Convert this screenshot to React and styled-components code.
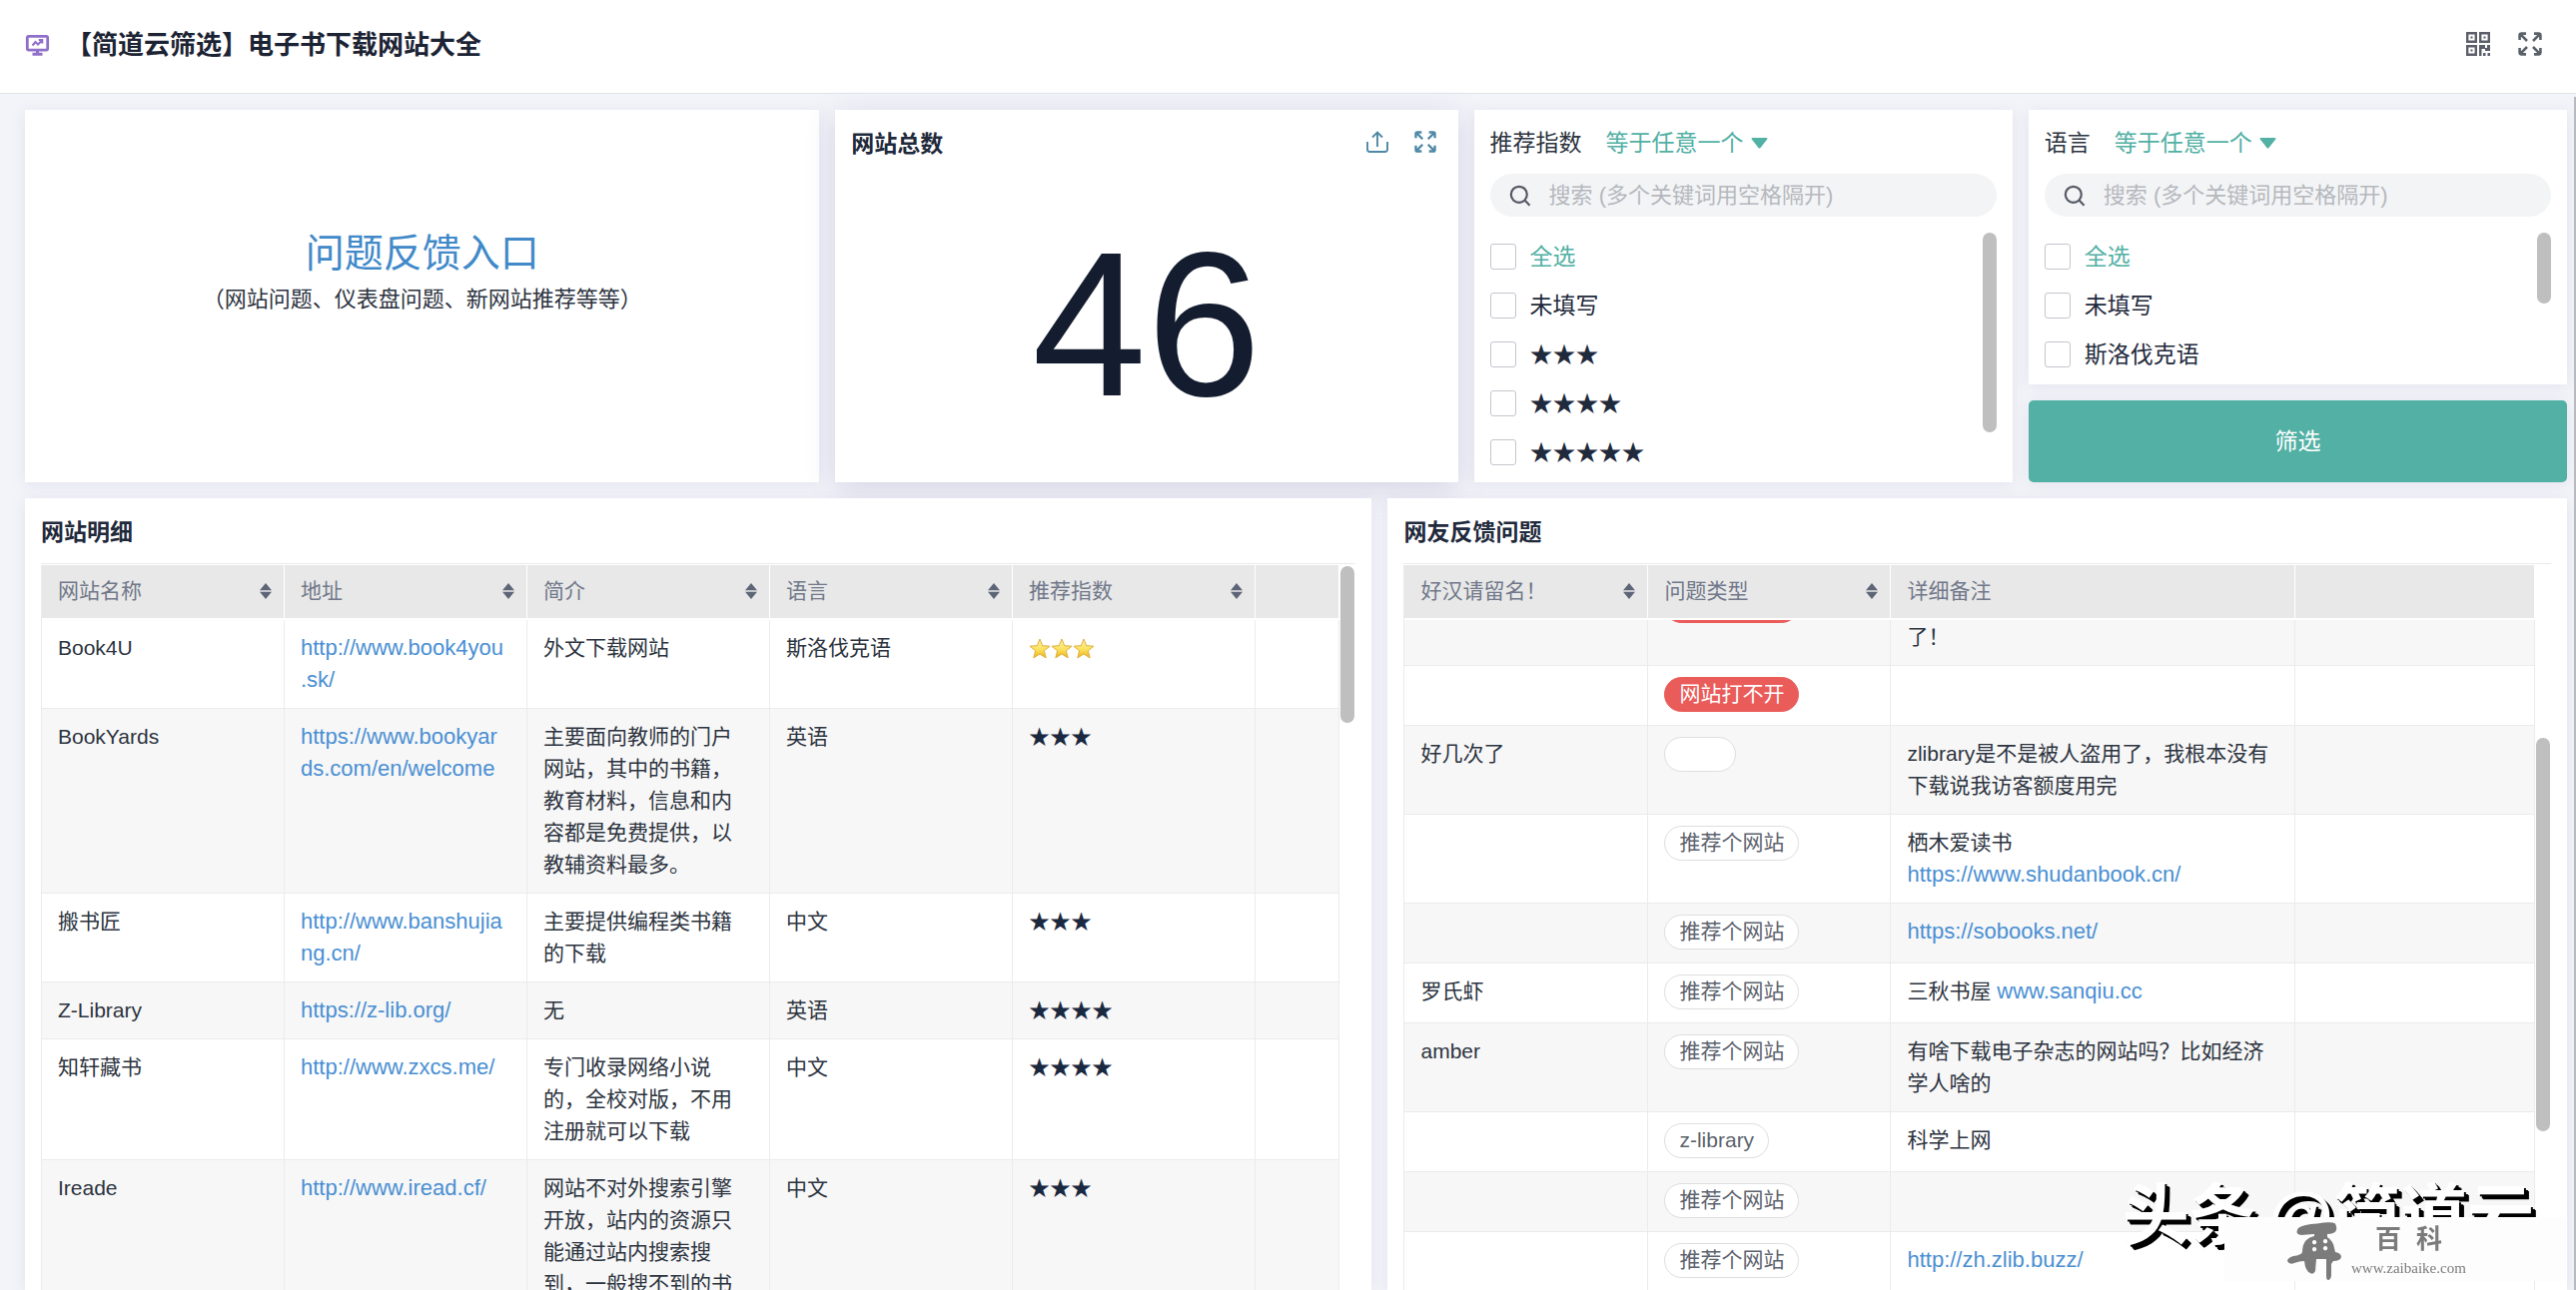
import React, { useLayoutEffect, useRef } from "react";
import styled, { createGlobalStyle, css } from "styled-components";

const color = {
  page: "#f3f4f9",
  ink: "#1f2a3c",
  text: "#2d3440",
  muted: "#71788a",
  teal: "#52b0a4",
  link: "#4a8fd3",
  line: "#ebebeb",
  thumb: "#bfbfbf",
};

const GlobalStyle = createGlobalStyle`
  *, *::before, *::after { box-sizing: border-box; }
  body {
    margin: 0;
    background: ${color.page};
    color: ${color.text};
    font-family: "Liberation Sans", "Noto Sans CJK SC", sans-serif;
    font-size: 23px;
    line-height: 34px;
  }
  button, input, select { font: inherit; color: inherit; }
`;

const Page = styled.div`
  position: relative;
  display: flex;
  flex-direction: column;
  height: 100vh;
  overflow: hidden;
`;

const Header = styled.header`
  display: flex;
  align-items: center;
  gap: 16px;
  flex: none;
  padding: 28px 34px 30px 25px;
  background: #fff;
  border-bottom: 1px solid #e3e4e8;
`;

const PageTitle = styled.h1`
  flex: 1;
  margin: 0;
  color: #1c2434;
  font-size: 26px;
  line-height: 35px;
  font-weight: 700;
`;

const HeaderTools = styled.div`
  display: flex;
  gap: 28px;
  padding-bottom: 4px;
`;

const IconButton = styled.button`
  display: flex;
  padding: 0;
  border: 0;
  background: none;
  color: ${(p) => p.$color || "#5a5f69"};
  cursor: pointer;
`;

const Body = styled.div`
  display: flex;
  flex: 1;
  min-height: 0;
`;

const Dashboard = styled.main`
  display: flex;
  flex-direction: column;
  gap: 16px;
  flex: 1;
  min-width: 0;
  padding: 16px 7px 0 25px;
`;

const PageScrollbar = styled.div`
  width: 2px;
  margin-top: 3px;
  background: #b9bac0;
`;

const SummaryRow = styled.section`
  display: grid;
  grid-template-columns: 795fr 623fr 539fr 539fr;
  gap: 16px;
`;

const TableRow = styled.section`
  display: grid;
  grid-template-columns: 1349fr 1181fr;
  grid-template-rows: minmax(0, 1fr);
  gap: 16px;
  flex: 1;
  min-height: 0;
`;

const Card = styled.article`
  display: flex;
  flex-direction: column;
  min-width: 0;
  min-height: 0;
  padding: 16px 16px 0;
  background: #fff;
  box-shadow: ${(p) =>
    p.$raised
      ? "0 6px 28px rgba(84, 78, 150, 0.2)"
      : "0 2px 14px rgba(84, 88, 140, 0.1)"};
`;

const CardHead = styled.div`
  display: flex;
  align-items: center;
  justify-content: space-between;
`;

const CardTitle = styled.h2`
  margin: 0;
  color: ${color.ink};
  font-size: 23px;
  line-height: 36px;
  font-weight: 700;
`;

const CardTools = styled.div`
  display: flex;
  gap: 26px;
  padding: 0 6px 4px 0;
`;

const FeedbackCard = styled(Card)`
  align-items: center;
  justify-content: center;
  padding-bottom: 66px;
`;

const FeedbackLink = styled.a`
  color: #4189c9;
  font-size: 39px;
  line-height: 56px;
  text-decoration: none;
`;

const FeedbackNote = styled.p`
  margin: 0;
  font-size: 22px;
  line-height: 36px;
`;

const BigNumber = styled.div`
  display: flex;
  flex: 1;
  align-items: center;
  justify-content: center;
  padding-top: 4px;
  color: #141c2f;
  font-size: 206px;
  line-height: 240px;
`;

const FilterHead = styled.div`
  display: flex;
  align-items: center;
`;

const FilterName = styled.span`
  margin-right: 24px;
`;

const MatchSelect = styled.select`
  appearance: none;
  margin: 0 7px 0 0;
  padding: 0;
  border: 0;
  background: none;
  color: ${color.teal};
`;

const SearchBox = styled.label`
  display: flex;
  align-items: center;
  gap: 18px;
  height: 43px;
  margin: 14px 0 15px;
  padding: 0 19px;
  border-radius: 22px;
  background: #f3f4f5;
  color: #565b66;
`;

const SearchInput = styled.input`
  flex: 1;
  min-width: 0;
  padding: 0;
  border: 0;
  outline: 0;
  background: none;
  font-size: 22px;
  &::placeholder {
    color: #b5b8be;
    opacity: 1;
  }
`;

const OptionArea = styled.div`
  display: flex;
  justify-content: space-between;
`;

const OptionList = styled.ul`
  margin: 0;
  padding: 0 0 6px;
  list-style: none;
`;

const Option = styled.label`
  display: flex;
  align-items: center;
  gap: 14px;
  height: 49px;
  color: ${(p) => (p.$all ? color.teal : color.ink)};
`;

const Tick = styled.input`
  appearance: none;
  flex: none;
  width: 26px;
  height: 26px;
  margin: 0;
  border: 1px solid #c3c6cc;
  border-radius: 3px;
  background: #fff;
`;

const Thumb = styled.div`
  flex: none;
  width: 14px;
  height: ${(p) => p.$length}px;
  margin-top: ${(p) => p.$offset || 1}px;
  border-radius: 7px;
  background: ${color.thumb};
`;

const FilterColumn = styled.div`
  display: flex;
  flex-direction: column;
  gap: 16px;
  min-width: 0;
`;

const FilterButton = styled.button`
  flex: 1;
  min-height: 80px;
  border: 0;
  border-radius: 5px;
  background: ${color.teal};
  color: #fff;
  box-shadow: 0 2px 14px rgba(84, 88, 140, 0.1);
  cursor: pointer;
`;

const GridFrame = styled.div`
  display: flex;
  flex: 1;
  gap: 1px;
  min-height: 0;
  margin-top: 13px;
  padding: 1px 1px 0 0;
  border-top: 1px solid ${color.line};
`;

const GridScroll = styled.div`
  flex: 1;
  min-width: 0;
  overflow: hidden;
`;

const Table = styled.table`
  width: 100%;
  table-layout: fixed;
  border-spacing: 0;
  border-left: 1px solid ${color.line};
  font-size: 21px;
  line-height: 32px;
`;

const HeadCell = styled.th`
  position: sticky;
  top: 0;
  z-index: 1;
  width: ${(p) => (p.$width ? p.$width + "px" : "auto")};
  padding: 10px 12px 11px 16px;
  border-right: 1px solid #fff;
  border-bottom: 2px solid #fff;
  background: #e8e8e8;
  color: ${color.muted};
  font-weight: 400;
  text-align: left;
`;

const HeadInner = styled.div`
  display: flex;
  align-items: center;
  justify-content: space-between;
  min-height: 32px;
`;

const Row = styled.tr`
  background: ${(p) => (p.$shaded ? "#f7f7f7" : "#fff")};
`;

const cellBase = css`
  border-right: 1px solid ${color.line};
  border-bottom: 1px solid ${color.line};
  vertical-align: top;
`;

const Cell = styled.td`
  ${cellBase}
  padding: 12px 17px 12px 16px;
  word-break: break-all;
`;

const PillCell = styled.td`
  ${cellBase}
  padding: 11px 16px 13px;
`;

const Pill = styled.span`
  display: block;
  width: fit-content;
  min-width: 72px;
  height: 35px;
  padding: 0 14px;
  border: 1px solid ${(p) => (p.$alert ? "#ea5c5a" : "#dddee0")};
  border-radius: 18px;
  background: ${(p) => (p.$alert ? "#ea5c5a" : "#fff")};
  color: ${(p) => (p.$alert ? "#fff" : "#5d636e")};
  line-height: 32px;
`;

const TextLink = styled.a`
  color: ${color.link};
  font-size: 22px;
  line-break: anywhere;
  text-decoration: none;
`;

const Stars = styled.span`
  color: #1b2940;
`;

const GoldStars = styled.span`
  display: flex;
  height: 32px;
  align-items: center;
`;

const Watermark = styled.div`
  position: absolute;
  right: 42px;
  bottom: 28px;
  z-index: 2;
  display: flex;
  gap: 12px;
  color: #fff;
  font-size: 67px;
  line-height: 92px;
  font-weight: 700;
  text-shadow: 2px 2px 0 #000, 4px 4px 0 #000, 5px 5px 0 #000;
`;

const SiteMark = styled.div`
  position: absolute;
  right: 10px;
  bottom: 9px;
  z-index: 3;
  display: flex;
  gap: 10px;
  width: 342px;
  height: 64px;
  padding: 5px 0 0 63px;
  background: #fdfdfd;
  color: #7b7b7b;
`;

const SiteText = styled.div`
  display: flex;
  flex-direction: column;
  align-items: center;
  font-family: "Liberation Serif", "Noto Sans CJK SC", serif;
  font-size: 15px;
  line-height: 20px;
`;

const SiteName = styled.div`
  display: flex;
  gap: 15px;
  font-size: 26px;
  line-height: 36px;
  font-weight: 700;
`;

function ExpandIcon({ size }) {
  return (
    <svg width={size} height={size} viewBox="0 0 24 24" fill="none" stroke="currentColor" strokeWidth="2.6">
      <path d="M1.6 8V3.4Q1.6 1.6 3.4 1.6H8M2.2 2.2L9 9" />
      <path d="M16 1.6h4.6q1.8 0 1.8 1.8V8M21.8 2.2L15 9" />
      <path d="M1.6 16v4.6q0 1.8 1.8 1.8H8M2.2 21.8L9 15" />
      <path d="M16 22.4h4.6q1.8 0 1.8-1.8V16M21.8 21.8L15 15" />
    </svg>
  );
}

function UploadIcon() {
  return (
    <svg width="22" height="22" viewBox="0 0 22 22" fill="none" stroke="currentColor" strokeWidth="1.9">
      <path d="M1 11v7.5Q1 21 3.5 21h15q2.5 0 2.5-2.5V11" />
      <path d="M11 16V2M6 6.5L11 1.5l5 5" />
    </svg>
  );
}

function QrIcon() {
  return (
    <svg width="24" height="24" viewBox="0 0 24 24" fill="none" stroke="currentColor" strokeWidth="2.4">
      <path d="M1.2 1.2h8.6v8.6H1.2zM14.2 1.2h8.6v8.6h-8.6zM1.2 14.2h8.6v8.6H1.2z" />
      <g fill="currentColor" stroke="none">
        <path d="M4.5 4.5h2v2h-2zM17.5 4.5h2v2h-2zM4.5 17.5h2v2h-2z" />
        <path d="M13 13h6v3h2v-3h3v6h-5v-2h-3.5v7H13zM17 21h2.5v3H17zM21.5 21H24v3h-2.5z" />
      </g>
    </svg>
  );
}

function DashboardIcon() {
  return (
    <svg width="25" height="24" viewBox="0 0 25 24" fill="none">
      <rect x="2.3" y="2.3" width="20.4" height="13.8" rx="1.5" stroke="#8f6fc9" strokeWidth="2.8" />
      <path d="M7.5 20.2h10M12.5 16v4" stroke="#8f6fc9" strokeWidth="3" />
      <path d="M7.5 11.5l3-3.5 2.5 2.5 4-4M13.8 5.9h3.5v3.5" stroke="#8f6fc9" strokeWidth="2" />
    </svg>
  );
}

function SearchIcon() {
  return (
    <svg width="22" height="22" viewBox="0 0 22 22" fill="none" stroke="currentColor" strokeWidth="2.2">
      <circle cx="9.8" cy="9.8" r="8" />
      <path d="M15.5 15.5l5 5.2" />
    </svg>
  );
}

function CaretIcon() {
  return (
    <svg width="17" height="11" viewBox="0 0 17 11" fill={color.teal}>
      <path d="M1.5 0h14q1.5 0.3 0.7 1.5L9.5 10q-1 1.2-2 0L0.8 1.5Q0 0.3 1.5 0z" />
    </svg>
  );
}

function SortIcon() {
  return (
    <svg width="12" height="16" viewBox="0 0 12 16" fill="#5d6577">
      <path d="M6 0l6 7.2H0zM6 16l6-7.2H0z" />
    </svg>
  );
}

function GoldStar() {
  return (
    <svg width="22" height="21" viewBox="0 0 22 21">
      <defs>
        <linearGradient id="gold" x1="0" y1="0" x2="0" y2="1">
          <stop offset="0" stopColor="#fdf3b0" />
          <stop offset="0.55" stopColor="#fbe15c" />
          <stop offset="1" stopColor="#eeb41c" />
        </linearGradient>
      </defs>
      <path
        d="M11 1l2.7 6.7 7.3.5-5.6 4.6 1.8 7.1L11 16l-6.2 3.9 1.8-7.1L1 8.2l7.3-.5z"
        fill="url(#gold)"
        stroke="#dfaf3a"
        strokeWidth="1"
      />
    </svg>
  );
}

function BrushLogo() {
  return (
    <svg width="54" height="58" viewBox="0 0 54 58" fill="currentColor">
      <path d="M11 6Q16 2 30 1.5Q44-1 48 1.5Q51 8 47 10.5Q42 13 32 11.5L14 13Q7 12 11 6z" />
      <path
        fillRule="evenodd"
        d="M27 10h13v5q6 4 7 11l1 4q6 1 6 5-1 4-8 4l-2 3v12q-1 4-3 4-2 0-2-4V37h-10l-1 12q-2 4-5 2-5-2-6-12-5 0-10 2-5 2-7-2 0-3 6-5 8-1 9-4 0-8 4-12 3-3 8-4zM27 18a2.2 2.2 0 1 0 .1 0zM38 17a2.2 2.2 0 1 0 .1 0zM27 25a2.2 2.2 0 1 0 .1 0zM38 24a2.2 2.2 0 1 0 .1 0z"
      />
    </svg>
  );
}

function FilterCard({ id, name, options, thumb }) {
  return (
    <Card>
      <FilterHead>
        <FilterName>{name}</FilterName>
        <MatchSelect aria-label={name + "匹配方式"}>
          <option>等于任意一个</option>
        </MatchSelect>
        <CaretIcon />
      </FilterHead>
      <SearchBox>
        <SearchIcon />
        <SearchInput type="text" aria-label={name + "搜索"} placeholder="搜索 (多个关键词用空格隔开)" />
      </SearchBox>
      <OptionArea>
        <OptionList>
          {options.map((label, i) => (
            <li key={label}>
              <Option $all={i === 0} htmlFor={id + i}>
                <Tick type="checkbox" id={id + i} />
                {label}
              </Option>
            </li>
          ))}
        </OptionList>
        <Thumb $length={thumb} />
      </OptionArea>
    </Card>
  );
}

function DataGrid({ title, columns, thumb, thumbOffset, scrolled = 0, children }) {
  const view = useRef(null);
  useLayoutEffect(() => {
    view.current.scrollTop = scrolled;
  }, [scrolled]);
  return (
    <Card>
      <CardTitle>{title}</CardTitle>
      <GridFrame>
        <GridScroll ref={view}>
          <Table>
            <thead>
              <tr>
                {columns.map((c, i) => (
                  <HeadCell key={i} $width={c.width} scope="col">
                    <HeadInner>
                      {c.label}
                      {c.sort && <SortIcon />}
                    </HeadInner>
                  </HeadCell>
                ))}
              </tr>
            </thead>
            <tbody>{children}</tbody>
          </Table>
        </GridScroll>
        <Thumb $length={thumb} $offset={thumbOffset} />
      </GridFrame>
    </Card>
  );
}

const siteColumns = [
  { label: "网站名称", width: 243, sort: true },
  { label: "地址", width: 243, sort: true },
  { label: "简介", width: 243, sort: true },
  { label: "语言", width: 243, sort: true },
  { label: "推荐指数", width: 243, sort: true },
  { label: "" },
];

const sites = [
  { name: "Book4U", url: "http://www.book4you.sk/", about: "外文下载网站", lang: "斯洛伐克语", gold: 3 },
  {
    name: "BookYards",
    url: "https://www.bookyards.com/en/welcome",
    about: "主要面向教师的门户网站，其中的书籍，教育材料，信息和内容都是免费提供，以教辅资料最多。",
    lang: "英语",
    stars: 3,
  },
  { name: "搬书匠", url: "http://www.banshujiang.cn/", about: "主要提供编程类书籍的下载", lang: "中文", stars: 3 },
  { name: "Z-Library", url: "https://z-lib.org/", about: "无", lang: "英语", stars: 4 },
  { name: "知轩藏书", url: "http://www.zxcs.me/", about: "专门收录网络小说的，全校对版，不用注册就可以下载", lang: "中文", stars: 4 },
  { name: "Ireade", url: "http://www.iread.cf/", about: "网站不对外搜索引擎开放，站内的资源只能通过站内搜索搜到，一般搜不到的书", lang: "中文", stars: 3 },
];

const feedbackColumns = [
  { label: "好汉请留名！", width: 244, sort: true },
  { label: "问题类型", width: 243, sort: true },
  { label: "详细备注", width: 405 },
  { label: "" },
];

const feedback = [
  { name: "", type: "网站打不开", alert: true, note: <><br />了！</> },
  { name: "", type: "网站打不开", alert: true, note: "" },
  { name: "好几次了", type: "", note: "zlibrary是不是被人盗用了，我根本没有下载说我访客额度用完" },
  {
    name: "",
    type: "推荐个网站",
    note: <>栖木爱读书<br /><TextLink href="https://www.shudanbook.cn/">https://www.shudanbook.cn/</TextLink></>,
  },
  { name: "", type: "推荐个网站", note: <TextLink href="https://sobooks.net/">https://sobooks.net/</TextLink> },
  { name: "罗氏虾", type: "推荐个网站", note: <>三秋书屋 <TextLink href="http://www.sanqiu.cc">www.sanqiu.cc</TextLink></> },
  { name: "amber", type: "推荐个网站", note: "有啥下载电子杂志的网站吗？比如经济学人啥的" },
  { name: "", type: "z-library", note: "科学上网" },
  { name: "", type: "推荐个网站", note: "" },
  { name: "", type: "推荐个网站", note: <TextLink href="http://zh.zlib.buzz/">http://zh.zlib.buzz/</TextLink> },
];

export default function App() {
  return (
    <Page>
      <GlobalStyle />
      <Header>
        <DashboardIcon />
        <PageTitle>【简道云筛选】电子书下载网站大全</PageTitle>
        <HeaderTools>
          <IconButton aria-label="二维码"><QrIcon /></IconButton>
          <IconButton aria-label="全屏"><ExpandIcon size={24} /></IconButton>
        </HeaderTools>
      </Header>
      <Body>
        <Dashboard>
          <SummaryRow>
            <FeedbackCard>
              <FeedbackLink href="#feedback">问题反馈入口</FeedbackLink>
              <FeedbackNote>（网站问题、仪表盘问题、新网站推荐等等）</FeedbackNote>
            </FeedbackCard>
            <Card $raised>
              <CardHead>
                <CardTitle>网站总数</CardTitle>
                <CardTools>
                  <IconButton $color="#4f88a6" aria-label="导出"><UploadIcon /></IconButton>
                  <IconButton $color="#4f88a6" aria-label="放大"><ExpandIcon size={22} /></IconButton>
                </CardTools>
              </CardHead>
              <BigNumber>46</BigNumber>
            </Card>
            <FilterCard id="rating" name="推荐指数" options={["全选", "未填写", "★★★", "★★★★", "★★★★★"]} thumb={200} />
            <FilterColumn>
              <FilterCard id="lang" name="语言" options={["全选", "未填写", "斯洛伐克语"]} thumb={71} />
              <FilterButton>筛选</FilterButton>
            </FilterColumn>
          </SummaryRow>
          <TableRow>
            <DataGrid title="网站明细" columns={siteColumns} thumb={157}>
              {sites.map((s, i) => (
                <Row key={s.name} $shaded={i % 2 === 1}>
                  <Cell>{s.name}</Cell>
                  <Cell><TextLink href={s.url}>{s.url}</TextLink></Cell>
                  <Cell>{s.about}</Cell>
                  <Cell>{s.lang}</Cell>
                  <Cell>
                    {s.gold ? (
                      <GoldStars>{Array.from({ length: s.gold }, (_, k) => <GoldStar key={k} />)}</GoldStars>
                    ) : (
                      <Stars>{"★".repeat(s.stars)}</Stars>
                    )}
                  </Cell>
                  <Cell />
                </Row>
              ))}
            </DataGrid>
            <DataGrid title="网友反馈问题" columns={feedbackColumns} thumb={394} thumbOffset={173} scrolled={43}>
              {feedback.map((f, i) => (
                <Row key={i} $shaded={i % 2 === 0}>
                  <Cell>{f.name}</Cell>
                  <PillCell><Pill $alert={f.alert}>{f.type}</Pill></PillCell>
                  <Cell>{f.note}</Cell>
                  <Cell />
                </Row>
              ))}
            </DataGrid>
          </TableRow>
        </Dashboard>
        <PageScrollbar />
      </Body>
      <Watermark><span>头条</span><span>@简道云</span></Watermark>
      <SiteMark>
        <BrushLogo />
        <SiteText>
          <SiteName><span>百</span><span>科</span></SiteName>
          www.zaibaike.com
        </SiteText>
      </SiteMark>
    </Page>
  );
}
